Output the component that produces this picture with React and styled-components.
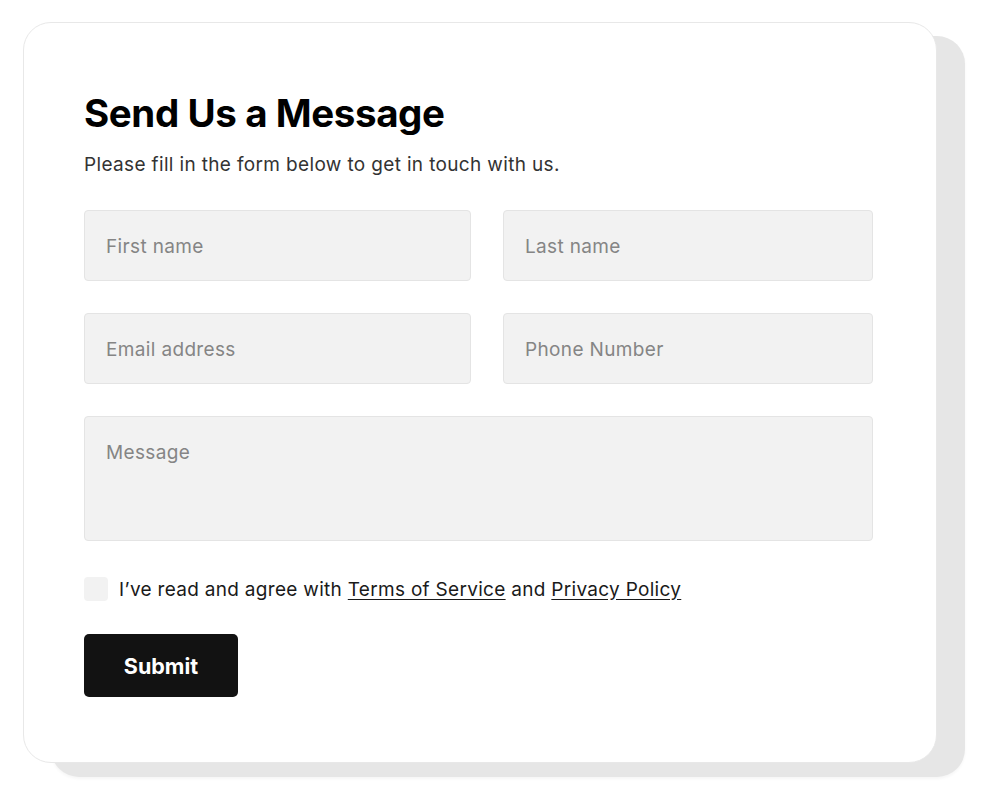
import React from 'react'
import styled, { createGlobalStyle } from 'styled-components'

const Global = createGlobalStyle`
  body {
    margin: 0;
    background: #ffffff;
    font-family: Inter, 'Noto Sans', sans-serif;
  }
`

const Page = styled.div`
  padding: 22px 0 0 23px;
  width: 990px;
  height: 800px;
  box-sizing: border-box;
`

const Card = styled.div`
  width: 914px;
  height: 741px;
  box-sizing: border-box;
  background: #fff;
  border: 1px solid #e8e8e8;
  border-radius: 28px;
  padding: 65px 0 0 60px;
  box-shadow: 28px 14px 0 #e6e6e6, 28px 16px 3px rgba(0, 0, 0, 0.04);
`

const Title = styled.h1`
  margin: 0;
  font-size: 38.5px;
  line-height: 50px;
  font-weight: 700;
  color: #000;
  letter-spacing: -0.4px;
`

const Subtitle = styled.p`
  margin: 15px 0 0;
  font-size: 19px;
  line-height: 24px;
  letter-spacing: 0.35px;
  color: #333;
`

const Form = styled.form`
  margin-top: 33px;
  display: grid;
  grid-template-columns: 387px 370px;
  column-gap: 32px;
  row-gap: 32px;
  width: 789px;
`

const Field = styled.input`
  box-sizing: border-box;
  height: 71px;
  width: 100%;
  background: #f2f2f2;
  border: 1px solid #e4e4e4;
  border-radius: 4px;
  padding: 2px 21px 0;
  font-family: inherit;
  font-size: 19px;
  letter-spacing: 0.35px;
  color: #222;
  outline: none;
  &::placeholder {
    color: #858585;
  }
`

const Area = styled.textarea`
  grid-column: 1 / -1;
  box-sizing: border-box;
  height: 125px;
  width: 100%;
  background: #f2f2f2;
  border: 1px solid #e4e4e4;
  border-radius: 4px;
  padding: 24px 21px;
  font-family: inherit;
  font-size: 19px;
  letter-spacing: 0.35px;
  line-height: 24px;
  resize: none;
  outline: none;
  &::placeholder {
    color: #858585;
  }
`

const Agree = styled.label`
  margin-top: 36px;
  display: flex;
  align-items: center;
  gap: 11px;
  font-size: 19px;
  letter-spacing: 0.3px;
  color: #1a1a1a;
`

const Box = styled.span`
  width: 24px;
  height: 24px;
  border-radius: 4px;
  background: #f2f2f2;
  flex-shrink: 0;
`

const Link = styled.a`
  color: #1a1a1a;
  text-decoration: underline;
  text-underline-offset: 3px;
`

const Submit = styled.button`
  margin-top: 33px;
  width: 154px;
  height: 63px;
  border: none;
  border-radius: 5px;
  background: #121212;
  color: #fff;
  font-family: inherit;
  font-size: 21.5px;
  font-weight: 700;
`

export default function App() {
  return (
    <Page>
      <Global />
      <Card>
        <Title>Send Us a Message</Title>
        <Subtitle>Please fill in the form below to get in touch with us.</Subtitle>
        <Form onSubmit={(e) => e.preventDefault()}>
          <Field placeholder="First name" />
          <Field placeholder="Last name" />
          <Field placeholder="Email address" />
          <Field placeholder="Phone Number" />
          <Area placeholder="Message" />
        </Form>
        <Agree>
          <Box />
          <span>
            I’ve read and agree with <Link>Terms of Service</Link> and <Link>Privacy Policy</Link>
          </span>
        </Agree>
        <Submit>Submit</Submit>
      </Card>
    </Page>
  )
}
